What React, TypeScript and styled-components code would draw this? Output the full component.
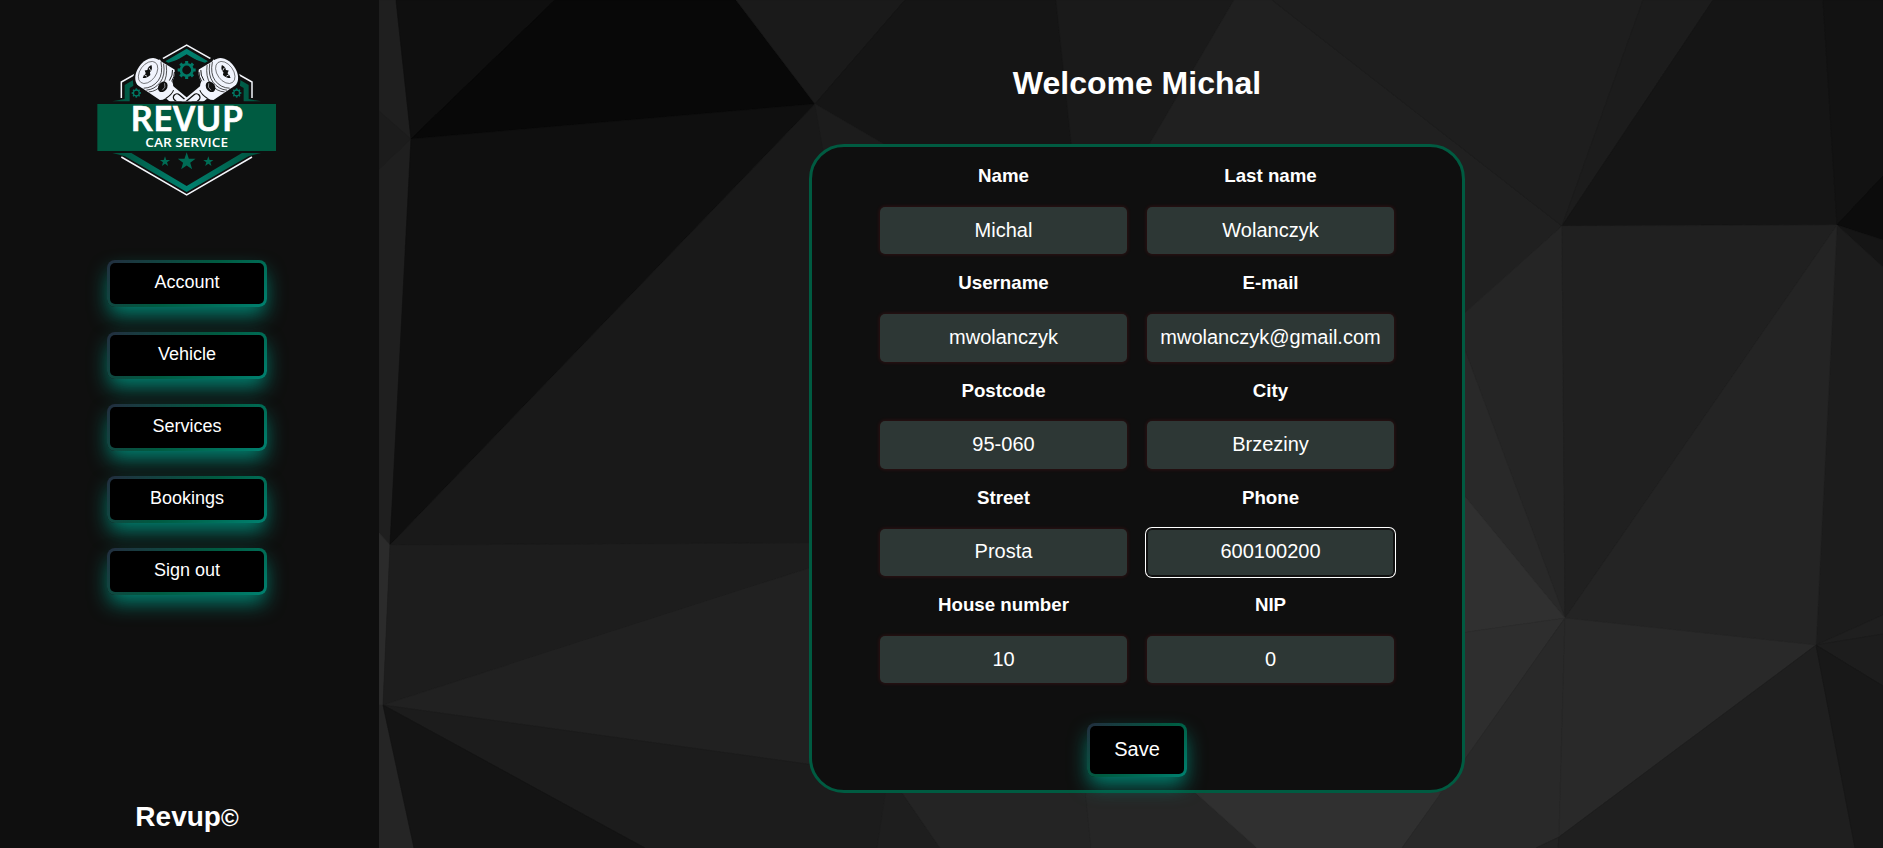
import React from 'react';
import styled, { createGlobalStyle, css } from 'styled-components';

const GlobalStyle = createGlobalStyle`
  *, *::before, *::after { box-sizing: border-box; }
  body {
    margin: 0;
    background: #0f0f0f;
    color: #fff;
    font-family: Arial, "Liberation Sans", sans-serif;
    overflow: hidden;
  }
`;

const Page = styled.div`
  display: flex;
  height: 100vh;
  overflow: hidden;
`;

const Sidebar = styled.aside`
  display: flex;
  flex-direction: column;
  align-items: center;
  flex: 0 0 379px;
  padding: 30px 5px 14px 0;
  background: #0f0f0f;
`;

const LogoArt = styled.svg`
  display: block;
  width: 220px;
  height: 180px;
  flex: none;
`;

const Menu = styled.nav`
  display: flex;
  flex-direction: column;
  gap: 25px;
  margin-top: 50px;
`;

const GlowButton = styled.button<{ $large?: boolean }>`
  display: flex;
  align-items: center;
  justify-content: center;
  width: ${p => (p.$large ? '100px' : '160px')};
  height: ${p => (p.$large ? '54px' : '47px')};
  padding: 0 0 2px;
  border: 3px solid transparent;
  border-radius: 8px;
  background:
    linear-gradient(#000, #000) padding-box,
    linear-gradient(144deg, #232d3f, #005b41 50%, #008170) border-box;
  box-shadow: 0 10px 20px -2px #008170;
  color: #fff;
  font-family: inherit;
  font-size: ${p => (p.$large ? '20px' : '18px')};
`;

const Brand = styled.h2`
  margin: auto 0 0;
  font-size: 28px;
  line-height: 32px;
`;

const Mark = styled.span`
  font-size: 24px;
`;

const Main = styled.main`
  position: relative;
  display: flex;
  flex: 1;
  flex-direction: column;
  align-items: center;
  padding: 65px 0 0 12px;
`;

const Backdrop = styled.svg`
  position: absolute;
  inset: 0;
  width: 1504px;
  height: 848px;
`;

const Title = styled.h1`
  position: relative;
  margin: 0 0 42px;
  font-size: 32px;
  line-height: 37px;
`;

const Card = styled.form`
  position: relative;
  display: flex;
  flex-direction: column;
  align-items: center;
  width: 656px;
  height: 649px;
  padding-bottom: 13px;
  border: 3px solid #005b41;
  border-radius: 35px;
  background: #0f0f0f;
`;

const Fields = styled.div`
  display: grid;
  grid-template-columns: 247px 247px;
  column-gap: 20px;
`;

const Field = styled.label`
  display: flex;
  flex-direction: column;
  height: 107.3px;
`;

const Label = styled.span`
  margin: 18.2px 0 19.7px;
  font-size: 18.72px;
  font-weight: 700;
  line-height: 22px;
  text-align: center;
`;

const Input = styled.input<{ $active?: boolean }>`
  width: 247px;
  height: 48px;
  padding: 0 0 1px;
  border: 0;
  border-radius: 5px;
  outline: none;
  background: #2d3735;
  box-shadow: 0 0 4px rgba(255, 30, 40, 0.2);
  color: #fff;
  font-family: inherit;
  font-size: 20px;
  text-align: center;
  ${p => p.$active && css`
    box-shadow: inset 0 0 0 1px #101010, 0 0 0 1px #101010, 0 0 0 2px #fff;
  `}
`;

const SaveRow = styled.div`
  margin-top: auto;
`;

/* Low-poly facets: fill followed by polygon corners in page coordinates. */
const facets: [string, string][] = [
  ['#1f1f1f', '379,0 396,0 411,139 390,545 379,534'],
  ['#1c1c1c', '379,111 411,139 379,169'],
  ['#2b2b2b', '379,533 390,545 383,705 379,705'],
  ['#252525', '379,705 383,705 414,848 379,848'],
  ['#0f0f0f', '396,0 555,0 411,139'],
  ['#080808', '411,139 555,0 736,0 815,104'],
  ['#0f0f0f', '411,139 815,104 390,545'],
  ['#191919', '390,545 815,104 850,300 850,543'],
  ['#1d1d1d', '390,545 850,542.7 850,555 383,705'],
  ['#212121', '383,705 850,555 850,770'],
  ['#1c1c1c', '383,705 850,770 890,770 877,848 645,848'],
  ['#141414', '383,705 645,848 414,848'],
  ['#1e1e1e', '889,770 886,770 902,793 940,848 877,848'],
  ['#242424', '885,768 1083,768 1091,848 940,848'],
  ['#262626', '1083,768 1170,770 1257,848 1091,848'],
  ['#303030', '1170,770 1458,770 1402,848 1257,848'],
  ['#1a1a1a', '736,0 905,0 815,104'],
  ['#151515', '905,0 1056,0 1073,160 911,160 815,104'],
  ['#1c1c1c', '815,104 911,160 825,160'],
  ['#1a1a1a', '1056,0 1234,0 1140,160 1073,160'],
  ['#202020', '1234,0 1272,0 1562,226 1440,336 1140,160'],
  ['#1e1e1e', '1272,0 1643,0 1562,226'],
  ['#1c1c1c', '1643,0 1713,0 1562,226'],
  ['#151515', '1713,0 1823,0 1837,225 1562,226'],
  ['#121212', '1823,0 1883,0 1883,176 1837,225'],
  ['#0c0c0c', '1837,225 1883,176 1883,240'],
  ['#151515', '1837,225 1883,240 1883,267'],
  ['#1c1c1c', '1837,225 1883,267 1883,615 1816,645'],
  ['#252525', '1562,226 1440,335 1465,350 1565,618'],
  ['#292929', '1465,350 1440,280 1440,466 1565,618'],
  ['#202020', '1562,226 1837,225 1565,618'],
  ['#242424', '1837,225 1816,645 1565,618'],
  ['#303030', '1440,466 1565,618 1440,636'],
  ['#2e2e2e', '1440,636 1565,618 1440,795'],
  ['#292929', '1565,618 1402,848 1536,848 1559,837'],
  ['#292929', '1565,618 1816,645 1559,837'],
  ['#222222', '1536,848 1559,837 1558,848'],
  ['#1f1f1f', '1816,645 1559,837 1558,848 1855,848'],
  ['#1f1f1f', '1816,645 1883,615 1883,634'],
  ['#1d1d1d', '1816,645 1883,634 1883,686'],
  ['#181818', '1816,645 1883,686 1883,848 1855,848'],
];

const LowPoly = () => (
  <Backdrop viewBox="379 0 1504 848" preserveAspectRatio="none" aria-hidden="true">
    {facets.map(([fill, points], i) => (
      <polygon key={i} fill={fill} stroke={fill} strokeWidth="0.6" points={points} />
    ))}
  </Backdrop>
);

const starPoints = (cx: number, cy: number, r: number) =>
  Array.from({ length: 10 }, (_, i) => {
    const radius = i % 2 ? r * 0.4 : r;
    const a = (Math.PI / 5) * i - Math.PI / 2;
    return `${(cx + radius * Math.cos(a)).toFixed(1)},${(cy + radius * Math.sin(a)).toFixed(1)}`;
  }).join(' ');

const Gear = ({ cx, cy, r }: { cx: number; cy: number; r: number }) => (
  <g transform={`translate(${cx} ${cy})`}>
    <circle r={r * 0.64} fill="none" stroke="#007a66" strokeWidth={r * 0.3} />
    {Array.from({ length: 8 }, (_, i) => (
      <rect
        key={i}
        x={-r * 0.17}
        y={-r}
        width={r * 0.34}
        height={r * 0.32}
        fill="#007a66"
        transform={`rotate(${i * 45})`}
      />
    ))}
  </g>
);

const Piston = () => (
  <g transform="translate(205 128) rotate(36)">
    <path d="M66-12L162-6V36L66 30Z" fill="#f1f4fd" />
    <path d="M155 2L114-1A10 10 0 0 0 112 20L155 24" fill="none" stroke="#0f0f0f" strokeWidth="4" />
    <path d="M0-49L58-54Q70-44 74-20Q90-12 92 10Q90 36 76 46L5 49Z" fill="#f1f4fd" />
    <path d="M54-49Q64-38 65-18M62-48Q71-36 72-20" fill="none" stroke="#0f0f0f" strokeWidth="2.6" />
    <ellipse rx="33" ry="49" fill="#f1f4fd" />
    <path
      d="M12-48Q38-24 38 2Q37 30 16 46M21-49Q46-24 46 2Q45 30 26 46M30-50Q55-24 55 2Q53 32 35 46"
      fill="none"
      stroke="#0f0f0f"
      strokeWidth="2"
    />
    <ellipse cx="-1" rx="24" ry="37" fill="none" stroke="#0f0f0f" strokeWidth="1.5" />
    <path d="M-6-24Q6-16 3-4L9 2Q8 14-4 23Q-8 14-5 6L-13 1L-7-5Q-12-14-6-24Z" fill="#0f0f0f" />
    <path d="M-7-13L2-9M-7 12L3 11" stroke="#f1f4fd" strokeWidth="2.5" />
    <ellipse cx="60" cy="9" rx="13" ry="17" fill="#0f0f0f" />
    <path d="M58-3Q70 4 65 18" fill="none" stroke="#f1f4fd" strokeWidth="1.5" />
    <path d="M92-2Q96 10 88 32" fill="none" stroke="#0f0f0f" strokeWidth="3" />
  </g>
);

const Logo = () => (
  <LogoArt viewBox="-9 0 660 540" role="img" aria-label="Revup car service">
    <defs>
      <linearGradient id="trim" gradientUnits="userSpaceOnUse" x1="95" x2="545" y1="0" y2="0">
        <stop offset="0" stopColor="#00503a" />
        <stop offset="0.5" stopColor="#008170" />
        <stop offset="1" stopColor="#00503a" />
      </linearGradient>
      <clipPath id="above-banner">
        <rect x="90" y="60" width="460" height="154" />
      </clipPath>
    </defs>
    <g fill="none" stroke="#f4f6fb" strokeWidth="4.5">
      <path d="M124 204V156L320 45L516 156V204" />
      <path d="M124 381L320 495L516 381" />
    </g>
    <path
      d="M97 214L134 207V165L320 56L506 165V207L543 214H491V174L320 73L149 174V214Z
         M97 369H154L320 468L486 369H543L505 379L320 486L135 379Z"
      fill="url(#trim)"
      fillRule="evenodd"
    />
    <g fill="none" stroke="#0f0f0f" strokeWidth="9">
      <path d="M165 170Q158 135 180 108Q210 76 240 82L252 96L294 122L292 150" />
      <path d="M475 170Q482 135 460 108Q430 76 400 82L388 96L346 122L348 150" />
    </g>
    <path d="M180 145L245 105L320 80L395 105L460 145L445 214H195Z" fill="#0f0f0f" />
    <g clipPath="url(#above-banner)">
      <Piston />
      <g transform="translate(640 0) scale(-1 1)">
        <Piston />
      </g>
    </g>
    <Gear cx={320} cy={120} r={27} />
    <Gear cx={169} cy={189} r={14} />
    <Gear cx={470} cy={189} r={14} />
    <rect x="52" y="222" width="536" height="141" fill="#005b41" />
    <g fill="#fff" fontFamily="'Open Sans', 'Noto Sans', sans-serif">
      <text
        x="151"
        y="304"
        fontSize="101"
        fontWeight="600"
        stroke="#fff"
        strokeWidth="2"
        textLength="340"
        lengthAdjust="spacingAndGlyphs"
      >
        REVUP
      </text>
      <text x="196" y="350" fontSize="39" fontWeight="600" textLength="248" lengthAdjust="spacingAndGlyphs">
        CAR SERVICE
      </text>
    </g>
    <g fill="#006b54">
      <polygon points={starPoints(320, 395, 28)} />
      <polygon points={starPoints(255, 395, 16)} />
      <polygon points={starPoints(385, 395, 16)} />
    </g>
  </LogoArt>
);

const menuItems = ['Account', 'Vehicle', 'Services', 'Bookings', 'Sign out'];

const profile = [
  { label: 'Name', value: 'Michal' },
  { label: 'Last name', value: 'Wolanczyk' },
  { label: 'Username', value: 'mwolanczyk' },
  { label: 'E-mail', value: 'mwolanczyk@gmail.com' },
  { label: 'Postcode', value: '95-060' },
  { label: 'City', value: 'Brzeziny' },
  { label: 'Street', value: 'Prosta' },
  { label: 'Phone', value: '600100200', active: true },
  { label: 'House number', value: '10' },
  { label: 'NIP', value: '0' },
];

export default function App() {
  return (
    <Page>
      <GlobalStyle />
      <Sidebar>
        <Logo />
        <Menu>
          {menuItems.map(item => (
            <GlowButton key={item} type="button">{item}</GlowButton>
          ))}
        </Menu>
        <Brand>Revup<Mark>©</Mark></Brand>
      </Sidebar>
      <Main>
        <LowPoly />
        <Title>Welcome Michal</Title>
        <Card onSubmit={e => e.preventDefault()}>
          <Fields>
            {profile.map(f => (
              <Field key={f.label}>
                <Label>{f.label}</Label>
                <Input defaultValue={f.value} $active={f.active} />
              </Field>
            ))}
          </Fields>
          <SaveRow>
            <GlowButton $large type="submit">Save</GlowButton>
          </SaveRow>
        </Card>
      </Main>
    </Page>
  );
}
